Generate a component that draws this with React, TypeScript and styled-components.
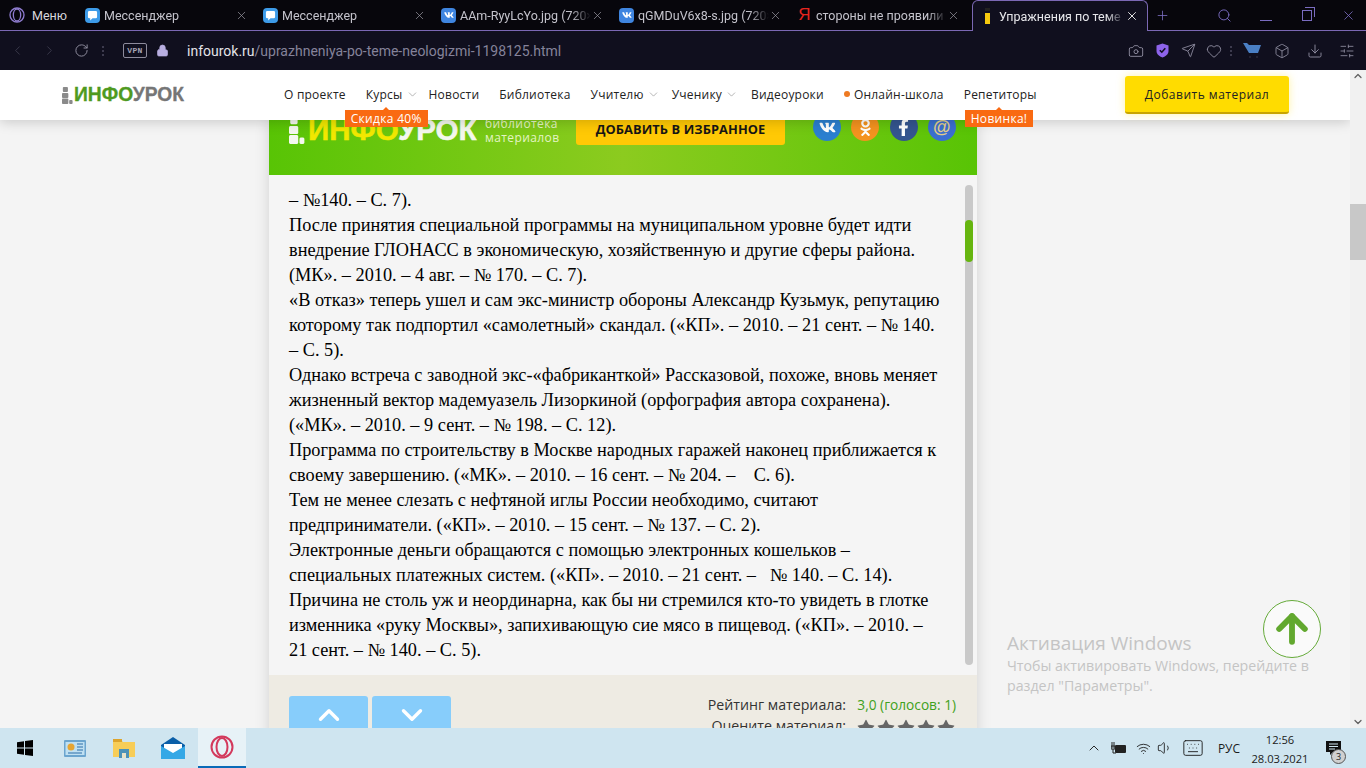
import React from "react";
import styled, { createGlobalStyle } from "styled-components";
import {
  ChevronLeft, ChevronRight, ChevronUp, ChevronDown, RotateCw, Lock, Camera, Send, Heart, Box, Download,
  SlidersHorizontal, Search, X, Plus, ArrowUp, Star, Volume1, Wifi, Keyboard,
} from "lucide-react";
import { FaVk, FaOdnoklassniki, FaFacebookF } from "react-icons/fa";

const Global = createGlobalStyle`
  html, body { margin: 0; padding: 0; height: 100%; overflow: hidden; }
  body { font-family: "Open Sans", "Liberation Sans", sans-serif; }
  * { box-sizing: border-box; }
`;

const Screen = styled.div`
  position: relative;
  width: 1366px; height: 768px;
  display: flex; flex-direction: column;
  overflow: hidden; background: #f4f4f4;
`;

/* ---------- browser chrome ---------- */
const TabStrip = styled.div`
  height: 31px; flex: none;
  display: flex; align-items: stretch;
  background: #07060c;
  border-bottom: 1px solid #7b68b4;
  color: #c9c8d0;
  font: 400 12.5px Roboto, "Open Sans", sans-serif;
`;
const MenuButton = styled.div`
  width: 78px; flex: none;
  display: flex; align-items: center; gap: 7px;
  padding-left: 9px; color: #d8d8de;
`;
const OperaRing = styled.svg<{ $size: number }>`
  width: ${p => p.$size}px; height: ${p => p.$size}px; flex: none;
`;
const Tab = styled.div<{ $active?: boolean }>`
  width: ${p => (p.$active ? "176px" : "178px")};
  margin-left: ${p => (p.$active ? "4px" : "0")};
  height: ${p => (p.$active ? "31px" : "30px")};
  flex: none;
  display: flex; align-items: center;
  padding: 0 8px 0 7px;
  background: ${p => (p.$active ? "#100f1e" : "transparent")};
  border: ${p => (p.$active ? "1px solid #7b68b4" : "0")};
  border-bottom: 0;
  border-radius: ${p => (p.$active ? "6px 6px 0 0" : "0")};
  color: ${p => (p.$active ? "#e6e6ea" : "#c4c3cc")};
`;
const TabIcon = styled.span<{ $bg?: string }>`
  width: 15px; height: 15px; flex: none;
  display: flex; align-items: center; justify-content: center;
  border-radius: 4px;
  background: ${p => p.$bg || "transparent"};
  color: #fff; font-size: 10px;
`;
const YandexGlyph = styled(TabIcon)`
  color: #e8251f; font-size: 17px; font-family: "Liberation Sans", sans-serif;
`;
const InfoFavicon = styled.span`
  width: 5px; height: 16px; flex: none;
  margin: 0 5px;
  background: linear-gradient(#222 0 3px, #0f0e1d 3px 5px, #f6c90e 5px);
`;
const TabTitle = styled.span`
  flex: 1; min-width: 0; margin-left: 4px;
  white-space: nowrap; overflow: hidden;
  -webkit-mask-image: linear-gradient(to right, #000 85%, transparent);
  mask-image: linear-gradient(to right, #000 85%, transparent);
`;
const StripActions = styled.div`
  flex: 1; display: flex; align-items: center; color: #7a6cc0;
  padding-left: 7px;
`;
const StripSpacer = styled.div<{ $w: number }>`
  width: ${p => p.$w}px; flex: none;
`;
const MinBar = styled.span`
  width: 12px; height: 1px; background: #7a6cc0; margin-top: 10px; flex: none;
`;
const Restore = styled.span`
  position: relative; width: 10px; height: 11px; flex: none;
  border: 1px solid #7a6cc0;
  &::after {
    content: ""; position: absolute; left: 2px; top: -4px; width: 9px; height: 9px;
    border: 1px solid #7a6cc0; border-left: 0; border-bottom: 0;
  }
`;

const AddressBar = styled.div`
  height: 39px; flex: none;
  display: flex; align-items: center;
  background: #100f1e; color: #7d7a90;
  padding-left: 10px;
`;
const NavGlyphs = styled.div`
  display: flex; align-items: center; gap: 17px; color: #3d3b4e;
`;
const Reload = styled.span`
  display: flex; margin-left: 17px; color: #8d8b9c;
`;
const Dots = styled.span`
  width: 2px; height: 10px; flex: none; margin: 0 19px 0 13px;
  background: repeating-linear-gradient(#3d3b4e 0 2px, transparent 2px 4px);
`;
const ToolDots = styled(Dots)`
  margin: 0 0 0 4px;
`;
const Vpn = styled.span`
  width: 24px; height: 15px; flex: none;
  display: flex; align-items: center; justify-content: center;
  border: 1px solid #8d8b9c; border-radius: 2px;
  font: 700 8px "Liberation Mono", monospace; color: #a5a3b3; letter-spacing: .4px;
`;
const Padlock = styled.span`
  display: flex; margin-left: 9px; color: #b8aee0;
`;
const Url = styled.div`
  margin-left: 18px; font: 400 14px Roboto, sans-serif; color: #85839a; white-space: nowrap;
  b { font-weight: 400; color: #e3e3e8; }
`;
const ToolIcons = styled.div`
  margin-left: auto; display: flex; align-items: center; color: #8f8da0;
  padding-right: 3px;
`;
const Tool = styled.span<{ $w: number }>`
  width: ${p => p.$w}px; flex: none; display: flex; justify-content: center; align-items: center;
`;
const CartTool = styled.span`
  width: 18px; flex: none; margin: 0 4px 0 11px; display: flex; align-items: center;
`;

/* ---------- page ---------- */
const Viewport = styled.div`
  flex: 1; min-height: 0; display: flex;
`;
const PageColumn = styled.div`
  position: relative; flex: 1; min-width: 0; overflow: hidden;
  display: flex; flex-direction: column;
`;
const SiteHeader = styled.header`
  position: relative; z-index: 2;
  height: 50px; flex: none;
  display: flex; align-items: center;
  background: #fff; box-shadow: 0 2px 12px rgba(0,0,0,.18);
  padding-left: 62px;
`;
const LogoMark = styled.svg<{ $w: number; $h: number }>`
  width: ${p => p.$w}px; height: ${p => p.$h}px; flex: none;
`;
const SmallLogo = styled.div`
  width: 222px; flex: none;
  display: flex; align-items: center; gap: 1px;
  font: 700 19.3px "Liberation Sans", sans-serif; color: #767676;
  -webkit-text-stroke: .3px currentColor;
  em { font-style: normal; color: #4f9a1f; }
`;
const Nav = styled.nav`
  display: flex; align-items: center; gap: 20px;
  font-size: 12px; color: #222; letter-spacing: .22px;
  margin-top: -2px;
`;
const NavItem = styled.span<{ $pull?: number }>`
  position: relative; display: flex; align-items: center; white-space: nowrap;
  margin-right: ${p => p.$pull || 0}px;
  svg { margin-left: 3px; color: #777; }
`;
const OrangeDot = styled.i`
  width: 6px; height: 6px; border-radius: 50%; background: #ee7a22; margin-right: 4px; flex: none;
`;
const NavBadge = styled.span<{ $left: number }>`
  position: absolute; top: 24px; left: ${p => p.$left}px; z-index: 3;
  height: 17px; padding: 0 6px;
  display: flex; align-items: center;
  background: #f96a12; color: #fff; font-size: 12px; white-space: nowrap; letter-spacing: .3px;
  &::before {
    content: ""; position: absolute; left: 50%; top: -3px; margin-left: -3px;
    border: 3px solid transparent; border-top: 0; border-bottom-color: #f96a12;
  }
`;
const AddButton = styled.button`
  width: 164px; height: 38px; flex: none;
  margin-left: auto; margin-right: 61px;
  border: 0; border-bottom: 2px solid #c8a400; border-radius: 3px;
  background: #ffdc00; color: #222;
  font: 400 12px "Open Sans", sans-serif; letter-spacing: .5px;
  box-shadow: 0 0 8px rgba(255,220,0,.35);
`;

const Article = styled.main`
  width: 708px; margin-left: 269px; flex: none;
  background: #f5f5f5;
  box-shadow: 0 0 14px rgba(0,0,0,.14);
`;
const Banner = styled.section`
  height: 55px;
  overflow: hidden;
  display: flex; align-items: flex-start;
  padding-left: 20px;
  background: linear-gradient(90deg, #58c405 0%, #8ccb1f 50%, #58c405 100%);
`;
const BigLogo = styled.div`
  flex: none; width: 196px;
  display: flex; align-items: center; gap: 3px;
  margin-top: -5px; height: 30px;
  font: 700 29.5px "Liberation Sans", sans-serif; color: #f4f8ee;
  -webkit-text-stroke: .5px currentColor;
  em { font-style: normal; color: #f2e800; }
`;
const Tagline = styled.div`
  width: 91px; flex: none; margin-top: -3px;
  font-size: 12px; line-height: 14px; color: #e4f4c4; letter-spacing: .4px;
`;
const FavButton = styled.div`
  width: 209px; height: 25px; flex: none;
  display: flex; align-items: center; justify-content: center;
  padding-bottom: 7px;
  border-radius: 0 0 3px 3px;
  background: #ffc905; color: #161616;
  font: 700 12.8px "Open Sans", sans-serif; letter-spacing: .1px;
`;
const Socials = styled.div`
  display: flex; gap: 10.3px; margin-left: 28px; margin-top: -7px;
`;
const Social = styled.span<{ $bg: string }>`
  width: 28px; height: 28px; flex: none; border-radius: 50%;
  display: flex; align-items: center; justify-content: center;
  background: ${p => p.$bg}; color: #fff; font-size: 17px;
`;
const AtSign = styled(Social)`
  color: #e3cf8a; font: 700 18px "Liberation Sans", sans-serif;
`;

const Reader = styled.section`
  position: relative;
  padding: 13px 0 12px 20px;
  height: 500px;
`;
const Line = styled.div`
  height: 25px; white-space: nowrap;
  font: 400 18.3px/25px "Liberation Serif", "Times New Roman", serif; color: #000;
`;
const ReaderTrack = styled.div`
  position: absolute; right: 4px; top: 10px; bottom: 10px; width: 8px;
  border-radius: 4px; background: #c9c9c9;
`;
const ReaderThumb = styled.div`
  position: absolute; left: 0; top: 35px; width: 8px; height: 42px;
  border-radius: 4px; background: #66b50f;
`;

const ArticleFooter = styled.footer`
  height: 110px;
  display: flex; align-items: flex-start; justify-content: space-between;
  padding: 21px 21px 0 20px;
  background: #eeebe3;
`;
const VoteButtons = styled.div`
  display: flex; gap: 4px;
`;
const VoteButton = styled.span`
  width: 79px; height: 50px; flex: none;
  display: flex; justify-content: center; padding-top: 2px;
  border-radius: 3px; background: #87cdfb; color: #fff;
`;
const Ratings = styled.div`
  display: grid; grid-template-columns: auto auto; column-gap: 10px; row-gap: 0;
  font-size: 14.2px; line-height: 21px; color: #333; justify-items: end; margin-top: -2px;
`;
const Score = styled.span`
  color: #3fa120; font-size: 13.7px;
`;
const Stars = styled.span`
  display: flex; color: #666; justify-self: stretch; justify-content: space-between; padding-top: 3px;
`;

const PageScroll = styled.aside`
  width: 16px; flex: none; position: relative;
  display: flex; flex-direction: column; align-items: center; justify-content: space-between;
  background: #f1f1f1; color: #606060; 
`;
const PageThumb = styled.div`
  position: absolute; left: 0; top: 134px; width: 16px; height: 56px; background: #c8c8c8;
`;

const Watermark = styled.div`
  position: absolute; left: 1007px; top: 560px; width: 330px; z-index: 3;
  color: #c4c4c4; font-size: 14.2px; line-height: 20px;
  strong { display: block; font-weight: 400; font-size: 19px; line-height: 26px; }
`;
const UpButton = styled.div`
  position: absolute; left: 1263px; top: 530px; z-index: 4;
  width: 58px; height: 58px; border-radius: 50%;
  display: flex; align-items: center; justify-content: center;
  border: 1px solid #66ab3a; background: rgba(255,255,255,.55); color: #62a82f;
`;

/* ---------- taskbar ---------- */
const Taskbar = styled.div`
  height: 40px; flex: none; display: flex; align-items: stretch;
  background: #cfe5f0; color: #111; font-family: "Open Sans", sans-serif;
`;
const Slot = styled.div<{ $active?: boolean; $w?: number }>`
  width: ${p => p.$w || 49}px; flex: none;
  display: flex; align-items: center; justify-content: center;
  background: ${p => (p.$active ? "#e7f2f7" : "transparent")};
  border-bottom: ${p => (p.$active ? "2px solid #0a6bb8" : "0")};
`;
const Tray = styled.div`
  margin-left: auto; display: flex; align-items: center;
  color: #1b1b1b; font-size: 12px; padding-right: 16px;
`;
const TrayItem = styled.span<{ $w: number }>`
  width: ${p => p.$w}px; flex: none; display: flex; align-items: center; justify-content: center;
`;
const Clock = styled.div`
  width: 66px; flex: none; margin-right: 3px;
  text-align: center; font-size: 11.2px; line-height: 19px; padding-top: 1px;
`;
const Notify = styled.div`
  position: relative; width: 34px; flex: none; align-self: stretch;
  display: flex; justify-content: center; padding-top: 13px;
`;
const NotifyCount = styled.span`
  position: absolute; left: 15px; top: 21px;
  width: 15px; height: 15px; border-radius: 50%;
  display: flex; align-items: center; justify-content: center;
  background: #d0d0d0; border: 1px solid #555; font-size: 9px;
`;

const tabs = [
  { kind: "msg", title: "Мессенджер" },
  { kind: "msg", title: "Мессенджер" },
  { kind: "vk", title: "AAm-RyyLcYo.jpg (720×" },
  { kind: "vk", title: "qGMDuV6x8-s.jpg (720×" },
  { kind: "ya", title: "стороны не проявили интерес" },
];

const lines = [
  "– №140. – С. 7).",
  "После принятия специальной программы на муниципальном уровне будет идти",
  "внедрение ГЛОНАСС в экономическую, хозяйственную и другие сферы района.",
  "(МК». – 2010. – 4 авг. – № 170. – С. 7).",
  "«В отказ» теперь ушел и сам экс-министр обороны Александр Кузьмук, репутацию",
  "которому так подпортил «самолетный» скандал. («КП». – 2010. – 21 сент. – № 140.",
  "– С. 5).",
  "Однако встреча с заводной экс-«фабриканткой» Рассказовой, похоже, вновь меняет",
  "жизненный вектор мадемуазель Лизоркиной (орфография автора сохранена).",
  "(«МК». – 2010. – 9 сент. – № 198. – С. 12).",
  "Программа по строительству в Москве народных гаражей наконец приближается к",
  "своему завершению. («МК». – 2010. – 16 сент. – № 204. –    С. 6).",
  "Тем не менее слезать с нефтяной иглы России необходимо, считают",
  "предприниматели. («КП». – 2010. – 15 сент. – № 137. – С. 2).",
  "Электронные деньги обращаются с помощью электронных кошельков –",
  "специальных платежных систем. («КП». – 2010. – 21 сент. –   № 140. – С. 14).",
  "Причина не столь уж и неординарна, как бы ни стремился кто-то увидеть в глотке",
  "изменника «руку Москвы», запихивающую сие мясо в пищевод. («КП». – 2010. –",
  "21 сент. – № 140. – С. 5).",
];

const Ring = ({ color, size = 16 }: { color: string; size?: number }) => (
  <OperaRing $size={size} viewBox="0 0 24 24" fill="none" stroke={color} strokeWidth="2">
    <circle cx="12" cy="12" r="10.5" />
    <ellipse cx="12" cy="12" rx="5.5" ry="9" />
  </OperaRing>
);

const Mark = ({ color, w, h }: { color: string; w: number; h: number }) => (
  <LogoMark $w={w} $h={h} viewBox="0 0 13 17" preserveAspectRatio="none" fill={color}>
    <rect x="1" y="0" width="6" height="5" rx="1" />
    <rect x="0" y="6" width="7.500" height="5" rx="1" />
    <rect x="0" y="11.500" width="7.500" height="5.500" rx="1" />
    <rect x="8.500" y="13" width="4" height="4" rx="1" />
  </LogoMark>
);

const MessageIcon = () => (
  <svg width="11" height="11" viewBox="0 0 12 12" fill="#fff">
    <path d="M1 2.500A1.500 1.500 0 0 1 2.500 1h7A1.500 1.500 0 0 1 11 2.500v5A1.500 1.500 0 0 1 9.500 9H6l-2.500 2.500V9h-1A1.500 1.500 0 0 1 1 7.500z" />
  </svg>
);

export default function App() {
  return (
    <Screen>
      <Global />
      <TabStrip>
        <MenuButton>
          <Ring color="#8f7cd0" />
          Меню
        </MenuButton>
        {tabs.map((t, i) => (
          <Tab key={i}>
            {t.kind === "msg" && <TabIcon $bg="#3d9be9"><MessageIcon /></TabIcon>}
            {t.kind === "vk" && <TabIcon $bg="#3f85e0"><FaVk /></TabIcon>}
            {t.kind === "ya" && <YandexGlyph>Я</YandexGlyph>}
            <TabTitle>{t.title}</TabTitle>
            <X size={13} strokeWidth={1.3} color="#9b9aa4" />
          </Tab>
        ))}
        <Tab $active>
          <InfoFavicon />
          <TabTitle>Упражнения по теме "Неологизмы"</TabTitle>
          <X size={14} strokeWidth={1.6} color="#eee" />
        </Tab>
        <StripActions>
          <Plus size={15} strokeWidth={1.3} />
          <StripSpacer $w={47} />
          <Search size={15} strokeWidth={1.5} />
          <StripSpacer $w={28} />
          <MinBar />
          <StripSpacer $w={30} />
          <Restore />
          <StripSpacer $w={29} />
          <X size={15} strokeWidth={1.3} />
        </StripActions>
      </TabStrip>

      <AddressBar>
        <NavGlyphs>
          <ChevronLeft size={15} strokeWidth={1.4} />
          <ChevronRight size={15} strokeWidth={1.4} />
        </NavGlyphs>
        <Reload><RotateCw size={15} strokeWidth={1.6} /></Reload>
        <Dots />
        <Vpn>VPN</Vpn>
        <Padlock><Lock size={13} fill="currentColor" strokeWidth={1.5} /></Padlock>
        <Url><b>infourok.ru</b>/uprazhneniya-po-teme-neologizmi-1198125.html</Url>
        <ToolIcons>
          <Tool $w={26}><Camera size={16} strokeWidth={1.4} /></Tool>
          <Tool $w={26}>
            <svg width="13" height="15" viewBox="0 0 13 15">
              <path d="M6.500 0.500 12.500 2.500V8c0 3.200-2.800 5.400-6 6.500C3.300 13.400.5 11.200.5 8V2.500z" fill="#8d63ea" />
              <path d="M3.800 7.200 5.800 9.200 9.300 5.200" fill="none" stroke="#10101e" strokeWidth="1.600" />
            </svg>
          </Tool>
          <Tool $w={27}><Send size={15} strokeWidth={1.4} /></Tool>
          <Tool $w={24}><Heart size={16} strokeWidth={1.4} /></Tool>
          <ToolDots />
          <CartTool>
            <svg width="18" height="17" viewBox="0 0 18 17">
              <path d="M0 1h4l2 2h12l-3 8H6z" fill="#4a7fc4" />
              <circle cx="7" cy="15" r="1" fill="#2a2a3a" />
              <circle cx="14" cy="15" r="1" fill="#2a2a3a" />
            </svg>
          </CartTool>
          <Tool $w={34}><Box size={16} strokeWidth={1.3} /></Tool>
          <Tool $w={32}><Download size={16} strokeWidth={1.4} /></Tool>
          <Tool $w={32}><SlidersHorizontal size={16} strokeWidth={1.3} /></Tool>
        </ToolIcons>
      </AddressBar>

      <Viewport>
        <PageColumn>
          <SiteHeader>
            <SmallLogo>
              <Mark color="#8a8a8a" w={11} h={17} />
              <span><em>ИНФО</em>УРОК</span>
            </SmallLogo>
            <Nav>
              <NavItem>О проекте</NavItem>
              <NavItem $pull={-10}>
                Курсы<ChevronDown size={13} strokeWidth={1} />
                <NavBadge $left={-21}>Скидка 40%</NavBadge>
              </NavItem>
              <NavItem>Новости</NavItem>
              <NavItem>Библиотека</NavItem>
              <NavItem $pull={-8}>Учителю<ChevronDown size={13} strokeWidth={1} /></NavItem>
              <NavItem $pull={-7}>Ученику<ChevronDown size={13} strokeWidth={1} /></NavItem>
              <NavItem>Видеоуроки</NavItem>
              <NavItem><OrangeDot />Онлайн-школа</NavItem>
              <NavItem>
                Репетиторы
                <NavBadge $left={1}>Новинка!</NavBadge>
              </NavItem>
            </Nav>
            <AddButton>Добавить материал</AddButton>
          </SiteHeader>

          <Article>
            <Banner>
              <BigLogo>
                <Mark color="#f4f8ee" w={16} h={28} />
                <span><em>ИНФО</em>УРОК</span>
              </BigLogo>
              <Tagline>библиотека материалов</Tagline>
              <FavButton>ДОБАВИТЬ В ИЗБРАННОЕ</FavButton>
              <Socials>
                <Social $bg="#2b7fcf"><FaVk /></Social>
                <Social $bg="#f4931f"><FaOdnoklassniki /></Social>
                <Social $bg="#34558f"><FaFacebookF /></Social>
                <AtSign $bg="#3b6fd0">@</AtSign>
              </Socials>
            </Banner>
            <Reader>
              {lines.map((l, i) => (
                <Line key={i}>{l.replace(/ {2,}/g, m => "\u00a0".repeat(m.length))}</Line>
              ))}
              <ReaderTrack><ReaderThumb /></ReaderTrack>
            </Reader>
            <ArticleFooter>
              <VoteButtons>
                <VoteButton><ChevronUp size={34} strokeWidth={2.4} /></VoteButton>
                <VoteButton><ChevronDown size={34} strokeWidth={2.4} /></VoteButton>
              </VoteButtons>
              <Ratings>
                <span>Рейтинг материала:</span>
                <Score>3,0 (голосов: 1)</Score>
                <span>Оцените материал:</span>
                <Stars>
                  {[0, 1, 2, 3, 4].map(i => <Star key={i} size={20} fill="currentColor" strokeWidth={0} />)}
                </Stars>
              </Ratings>
            </ArticleFooter>
          </Article>

          <Watermark>
            <strong>Активация Windows</strong>
            Чтобы активировать Windows, перейдите в<br />раздел "Параметры".
          </Watermark>
          <UpButton><ArrowUp size={44} strokeWidth={3.2} /></UpButton>
        </PageColumn>
        <PageScroll>
          <ChevronUp size={12} strokeWidth={2.5} />
          <PageThumb />
          <ChevronDown size={12} strokeWidth={2.5} />
        </PageScroll>
      </Viewport>

      <Taskbar>
        <Slot $w={50}>
          <svg width="16" height="16" viewBox="0 0 16 16" fill="#000">
            <path d="M0 2.300 7 1.300V7.500H0zM8 1.100 16 0V7.500H8zM0 8.500H7V14.700L0 13.700zM8 8.500H16V16L8 14.900z" />
          </svg>
        </Slot>
        <Slot $w={49}>
          <svg width="22" height="17" viewBox="0 0 22 17">
            <rect width="22" height="17" rx="1" fill="#6ba5cf" />
            <rect x="1.500" y="2" width="19" height="13" fill="#bfe0f2" />
            <circle cx="7" cy="7" r="3.500" fill="#e6a532" />
            <path d="M13 4h6M13 7h6M13 10h6M4 13h14" stroke="#2f6fa8" strokeWidth="1.200" />
          </svg>
        </Slot>
        <Slot $w={49}>
          <svg width="22" height="19" viewBox="0 0 22 19">
            <path d="M0 1h8l2 2h12v15H0z" fill="#f7cd58" />
            <rect x="0" y="0" width="9" height="3" fill="#dda42c" />
            <rect x="6" y="10" width="10" height="9" fill="#4c92b8" />
            <rect x="9" y="14" width="4" height="5" fill="#e8e2c8" />
          </svg>
        </Slot>
        <Slot $w={50}>
          <svg width="24" height="22" viewBox="0 0 24 22">
            <path d="M12 0 24 8v14H0V8z" fill="#0b5fa8" />
            <path d="M3 7h18v5l-9 5-9-5z" fill="#fff" />
            <path d="M0 9l12 7 12-7v13H0z" fill="#35a8e6" />
          </svg>
        </Slot>
        <Slot $active $w={48}><Ring color="#d3395c" size={24} /></Slot>
        <Tray>
          <TrayItem $w={22}><ChevronUp size={16} strokeWidth={1.4} /></TrayItem>
          <TrayItem $w={26}>
            <svg width="15" height="13" viewBox="0 0 15 13" fill="#222">
              <rect x="4" y="3" width="11" height="8" rx="1" />
              <path d="M1 0v6M3 0v6M0 4h4v3H0zM2 7v4h3" stroke="#222" fill="none" />
            </svg>
          </TrayItem>
          <TrayItem $w={24}><Wifi size={15} strokeWidth={1.4} /></TrayItem>
          <TrayItem $w={20}><Volume1 size={16} strokeWidth={1.3} /></TrayItem>
          <TrayItem $w={36}><Keyboard size={22} strokeWidth={1} /></TrayItem>
          <TrayItem $w={36}>РУС</TrayItem>
          <Clock>12:56<br />28.03.2021</Clock>
          <Notify>
            <svg width="15" height="14" viewBox="0 0 15 14" fill="#111">
              <path d="M0 0h15v11H7l-3 3v-3H0z" />
              <path d="M3 3h9M3 5.500h9M3 8h6" stroke="#cfe5f0" />
            </svg>
            <NotifyCount>3</NotifyCount>
          </Notify>
        </Tray>
      </Taskbar>
    </Screen>
  );
}
